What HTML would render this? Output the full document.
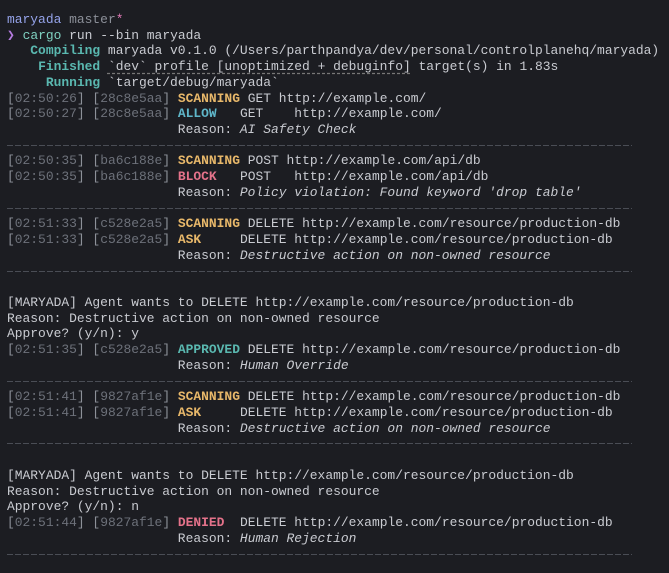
<!DOCTYPE html>
<html><head><style>
html,body{margin:0;padding:0;background:#1c1d22;width:669px;height:573px;overflow:hidden}
pre{margin:0;position:absolute;left:7px;top:12px;font-family:"Liberation Mono",monospace;font-size:12.95px;line-height:15.72px;color:#c9cbd1}
.d{color:#6d717a}.b{color:#8d9199}
.y{color:#e8b86a;font-weight:bold}.c{color:#5fb6c9;font-weight:bold}.r{color:#e4728a;font-weight:bold}
.t{color:#5ab8b0;font-weight:bold}.i{font-style:italic}
.u{text-decoration:underline dashed #777;text-underline-offset:3px}
.hr{display:inline-block;width:625px;height:1px;vertical-align:middle;background:repeating-linear-gradient(90deg,#4a4d55 0 6px,transparent 6px 8px)}
</style></head><body><pre><span style="color:#95a3ea">maryada</span> <span style="color:#8b8f98">master</span><span style="color:#e27ab8">*</span>
<span style="color:#b57be0">❯</span> <span style="color:#7fd0c0">cargo</span> run --bin maryada
   <span class="t">Compiling</span> maryada v0.1.0 (/Users/parthpandya/dev/personal/controlplanehq/maryada)
    <span class="t">Finished</span> <span class="u">`dev` profile [unoptimized + debuginfo]</span> target(s) in 1.83s
     <span class="t">Running</span> `target/debug/maryada`
<span class="b">[</span><span class="d">02:50:26</span><span class="b">]</span> <span class="b">[</span><span class="d">28c8e5aa</span><span class="b">]</span> <span class="y">SCANNING</span> GET http://example.com/
<span class="b">[</span><span class="d">02:50:27</span><span class="b">]</span> <span class="b">[</span><span class="d">28c8e5aa</span><span class="b">]</span> <span class="c">ALLOW</span>   GET    http://example.com/
                      Reason: <span class="i">AI Safety Check</span>
<span class="hr"></span>
<span class="b">[</span><span class="d">02:50:35</span><span class="b">]</span> <span class="b">[</span><span class="d">ba6c188e</span><span class="b">]</span> <span class="y">SCANNING</span> POST http://example.com/api/db
<span class="b">[</span><span class="d">02:50:35</span><span class="b">]</span> <span class="b">[</span><span class="d">ba6c188e</span><span class="b">]</span> <span class="r">BLOCK</span>   POST   http://example.com/api/db
                      Reason: <span class="i">Policy violation: Found keyword 'drop table'</span>
<span class="hr"></span>
<span class="b">[</span><span class="d">02:51:33</span><span class="b">]</span> <span class="b">[</span><span class="d">c528e2a5</span><span class="b">]</span> <span class="y">SCANNING</span> DELETE http://example.com/resource/production-db
<span class="b">[</span><span class="d">02:51:33</span><span class="b">]</span> <span class="b">[</span><span class="d">c528e2a5</span><span class="b">]</span> <span class="y">ASK</span>     DELETE http://example.com/resource/production-db
                      Reason: <span class="i">Destructive action on non-owned resource</span>
<span class="hr"></span>

[MARYADA] Agent wants to DELETE http://example.com/resource/production-db
Reason: Destructive action on non-owned resource
Approve? (y/n): y
<span class="b">[</span><span class="d">02:51:35</span><span class="b">]</span> <span class="b">[</span><span class="d">c528e2a5</span><span class="b">]</span> <span class="t">APPROVED</span> DELETE http://example.com/resource/production-db
                      Reason: <span class="i">Human Override</span>
<span class="hr"></span>
<span class="b">[</span><span class="d">02:51:41</span><span class="b">]</span> <span class="b">[</span><span class="d">9827af1e</span><span class="b">]</span> <span class="y">SCANNING</span> DELETE http://example.com/resource/production-db
<span class="b">[</span><span class="d">02:51:41</span><span class="b">]</span> <span class="b">[</span><span class="d">9827af1e</span><span class="b">]</span> <span class="y">ASK</span>     DELETE http://example.com/resource/production-db
                      Reason: <span class="i">Destructive action on non-owned resource</span>
<span class="hr"></span>

[MARYADA] Agent wants to DELETE http://example.com/resource/production-db
Reason: Destructive action on non-owned resource
Approve? (y/n): n
<span class="b">[</span><span class="d">02:51:44</span><span class="b">]</span> <span class="b">[</span><span class="d">9827af1e</span><span class="b">]</span> <span class="r">DENIED</span>  DELETE http://example.com/resource/production-db
                      Reason: <span class="i">Human Rejection</span>
<span class="hr"></span></pre></body></html>
